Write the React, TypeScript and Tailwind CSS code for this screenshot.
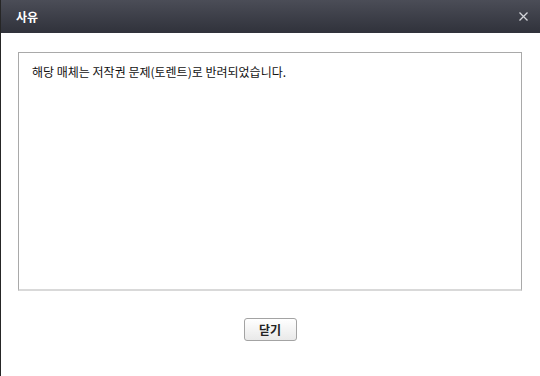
import React from 'react';

const font = { fontFamily: '"Noto Sans CJK KR", "Noto Sans", sans-serif' };

const ReasonDialog: React.FC = () => {
  return (
    <div className="w-[540px] h-[376px] bg-white border-l border-[#262626] flex flex-col overflow-hidden" style={font}>
      <div className="h-[33px] shrink-0 flex items-center justify-between pl-[15px] pr-[12px] bg-gradient-to-b from-[#4b4d57] to-[#30323b]">
        <span className="text-white text-[12px] font-bold leading-none">사유</span>
        <svg width="9" height="9" viewBox="0 0 9 9">
          <path d="M0.5 0.5 L8.5 8.5 M8.5 0.5 L0.5 8.5" stroke="#d4d5da" strokeWidth="1.3" />
        </svg>
      </div>
      <div className="flex flex-col items-center pt-[19px] pl-[17px] pr-[18px]">
        <div className="w-full h-[239px] border border-[#a9a9a9] border-b-2 border-b-[#d9d9d9] px-[13px] pt-[10px] text-[12px] leading-[17px] text-[#111]">
          해당 매체는 저작권 문제(토렌트)로 반려되었습니다.
        </div>
        <button className="mt-[27px] w-[53px] h-[23px] rounded-[3px] border border-[#a3a3a3] bg-gradient-to-b from-white to-[#e9e9e9] text-[12px] font-bold text-[#222] leading-none">
          닫기
        </button>
      </div>
    </div>
  );
};

export default function App() {
  return <ReasonDialog />;
}
